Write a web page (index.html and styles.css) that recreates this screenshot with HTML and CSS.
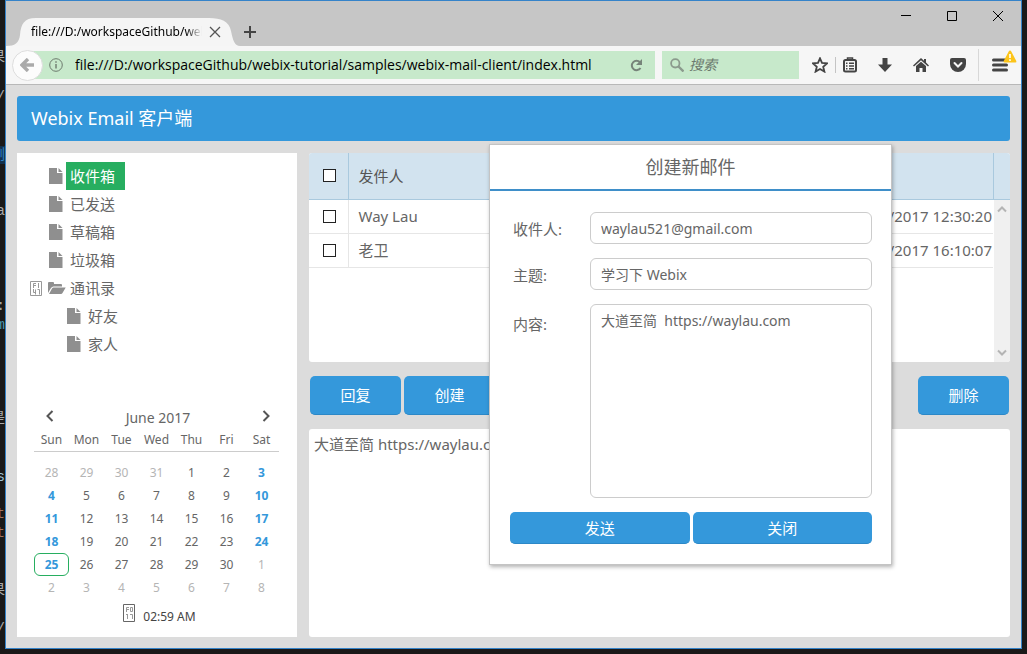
FILE: index.html
```html
<!DOCTYPE html>
<html lang="zh-CN">
<head>
<meta charset="utf-8">
<title>Webix Email 客户端</title>
<link rel="stylesheet" href="styles.css">
</head>
<body>
<svg class="defs" aria-hidden="true">
  <symbol id="file" viewBox="0 0 14 16"><path fill="currentColor" d="M0 0h8v5h5.500v11H0z"/><path fill="currentColor" d="M9.500 0v4h4z"/></symbol>
</svg>
<div class="desktop">
  <div class="code" aria-hidden="true">
    <span class="code-line light" style="top:48px">果</span>
    <span class="code-line light" style="top:88px">/</span>
    <span class="code-line blue boxed" style="top:146px">例</span>
    <span class="code-line light" style="top:202px">na</span>
    <span class="code-line light" style="top:297px">:</span>
    <span class="code-line teal" style="top:316px">m</span>
    <span class="code-line light" style="top:409px">是</span>
    <span class="code-line pale" style="top:468px">s</span>
    <span class="code-line brown" style="top:505px">t</span>
    <span class="code-line brown" style="top:524px">t</span>
    <span class="code-line light" style="top:581px">果</span>
    <span class="code-line light" style="top:620px">/</span>
  </div>
  <div class="window">
    <div class="titlebar">
      <div class="tab">
        <svg class="tab-shape" viewBox="0 0 234 28" preserveAspectRatio="none"><path fill="#f5f5f5" d="M0 28C9 28 13 25 14 17C15 6 18 0 30 0H203C215 0 223 3 225 13C227 23 229 28 234 28z"/></svg>
        <span class="tab-title">file:///D:/workspaceGithub/webix</span>
        <button class="plain" aria-label="Close tab"><svg width="12" height="12" viewBox="0 0 12 12"><path d="M1 1l10 10M11 1L1 11" stroke="#555" stroke-width="1.300"/></svg></button>
      </div>
      <button class="plain new-tab" aria-label="New tab"><svg width="12" height="12" viewBox="0 0 12 12"><path d="M6 0v12M0 6h12" stroke="#444" stroke-width="2"/></svg></button>
      <div class="win-controls">
        <button class="plain" aria-label="Minimize"><svg width="10" height="10" viewBox="0 0 10 10"><path d="M0 4.500h10" stroke="#000"/></svg></button>
        <button class="plain" aria-label="Maximize"><svg width="10" height="10" viewBox="0 0 10 10"><path d="M.5.5h9v9h-9z" fill="none" stroke="#000"/></svg></button>
        <button class="plain" aria-label="Close"><svg width="10" height="10" viewBox="0 0 10 10"><path d="M0 0l10 10M10 0L0 10" stroke="#000"/></svg></button>
      </div>
    </div>
    <div class="toolbar">
      <button class="plain back" aria-label="Back"><svg width="16" height="14" viewBox="0 0 16 14"><path d="M8 1L2 7l6 6M3 7h11" fill="none" stroke="#aaa" stroke-width="3.400"/></svg></button>
      <div class="url">
        <svg width="14" height="14" viewBox="0 0 14 14"><circle cx="7" cy="7" r="6.300" fill="none" stroke="#6d7a6d"/><path d="M7 6v4.500M7 3.200v1.500" stroke="#6d7a6d" stroke-width="1.400"/></svg>
        <input class="url-text" aria-label="Address" value="file:///D:/workspaceGithub/webix-tutorial/samples/webix-mail-client/index.html">
        <button class="plain" aria-label="Reload"><svg width="13" height="13" viewBox="0 0 13 13"><path d="M10 3.300A4.700 4.700 0 1 0 10.500 9" fill="none" stroke="#77847a" stroke-width="2"/><path d="M12 0v6H6z" fill="#77847a"/></svg></button>
      </div>
      <div class="search">
        <svg width="14" height="14" viewBox="0 0 14 14"><circle cx="5.300" cy="5.300" r="4.200" fill="none" stroke="#8b9a8d" stroke-width="1.800"/><path d="M8.500 8.500l5 5" stroke="#8b9a8d" stroke-width="2.400"/></svg>
        <input class="search-text" aria-label="搜索" placeholder="搜索">
      </div>
      <div class="tools">
        <button class="plain" aria-label="Bookmark"><svg width="16" height="16" viewBox="0 0 16 16"><path d="M8 1.300l2 4.600 5 .5-3.800 3.300 1.200 4.900L8 12l-4.400 2.600 1.200-4.900L1 6.400l5-.5z" fill="none" stroke="#444" stroke-width="1.800"/></svg></button>
        <i class="rule short"></i>
        <button class="plain" aria-label="Bookmarks list"><svg width="14" height="16" viewBox="0 0 14 16"><path d="M4.500 3V1h5v2" fill="none" stroke="#444" stroke-width="1.500"/><rect x="1" y="3" width="12" height="11.500" rx="1.500" fill="none" stroke="#444" stroke-width="2"/><path d="M3 6.300h1.500M6 6.300h5M3 9h1.500M6 9h5M3 11.700h1.500M6 11.700h5" stroke="#444" stroke-width="1.400"/></svg></button>
        <button class="plain" aria-label="Downloads"><svg width="14" height="14" viewBox="0 0 14 14"><path d="M4.500 0h5v6.500H14L7 14 0 6.500h4.500z" fill="#444"/></svg></button>
        <button class="plain" aria-label="Home"><svg width="16" height="14" viewBox="0 0 16 14"><path d="M0 7.500L8 0l3 2.800V1h2v3.600l3 2.900-1 1L8 2.300 1 8.500z" fill="#444"/><path d="M8 3.700L13 8v6H9.500v-4h-3v4H3V8z" fill="#444"/></svg></button>
        <button class="plain" aria-label="Pocket"><svg width="16" height="14" viewBox="0 0 16 14"><path d="M2 0h12q2 0 2 2v4a8 8 0 0 1-16 0V2q0-2 2-2z" fill="#444"/><path d="M4.500 5L8 8.500 11.500 5" fill="none" stroke="#f5f5f5" stroke-width="2" stroke-linecap="round"/></svg></button>
        <i class="rule"></i>
        <button class="plain menu" aria-label="Menu"><svg width="16" height="14" viewBox="0 0 16 14"><path d="M1.500 2h13M1.500 7h13M1.500 12h13" stroke="#444" stroke-width="3" stroke-linecap="round"/></svg><svg class="warn" width="14" height="13" viewBox="0 0 14 13"><path d="M7 .5q.8 0 1.300 1l5 9.500q.5 1.500-1 1.500H1.700q-1.500 0-1-1.500l5-9.500Q6.200.5 7 .5z" fill="#fcc419"/><path d="M7 4v4M7 9.300v1.600" stroke="#fff" stroke-width="1.600"/></svg></button>
      </div>
    </div>

    <div class="app">
      <h1 class="app-title">Webix Email 客户端</h1>
      <div class="columns">
        <aside class="side">
          <ul class="tree">
            <li class="node selected"><svg class="leaf"><use href="#file"/></svg><a href="#">收件箱</a></li>
            <li class="node"><svg class="leaf"><use href="#file"/></svg><a href="#">已发送</a></li>
            <li class="node"><svg class="leaf"><use href="#file"/></svg><a href="#">草稿箱</a></li>
            <li class="node"><svg class="leaf"><use href="#file"/></svg><a href="#">垃圾箱</a></li>
            <li class="node parent"><svg class="toggle" width="12" height="15" viewBox="0 0 12 15" fill="none" stroke="#999"><path d="M.5.5h11v14H.5z"/><path d="M3.500 7V2.500h2.500M3.500 4.500H6M8.500 2v5M3.500 8v3.500H6M5.500 8.500v5M7.500 8.500h2v5"/></svg><svg class="folder" width="18" height="14" viewBox="0 0 18 14"><path d="M0 12V2q0-1 1-1h4q1 0 1 1v1h7q1 0 1 1v1.500H5.500Q4 5.500 3 7z" fill="#8f8f8f"/><path d="M5.500 6.500h12.200L14.500 12q-.5 1-1.500 1H1l3-5.500q.6-1 1.500-1z" fill="#8f8f8f"/></svg><a href="#">通讯录</a></li>
            <li class="node child"><svg class="leaf"><use href="#file"/></svg><a href="#">好友</a></li>
            <li class="node child"><svg class="leaf"><use href="#file"/></svg><a href="#">家人</a></li>
          </ul>
          <div class="calendar">
            <div class="cal-head">
              <button class="plain" aria-label="Previous month"><svg width="8" height="12" viewBox="0 0 8 12"><path d="M6.500 1L1.500 6l5 5" fill="none" stroke="#555" stroke-width="2"/></svg></button>
              <span class="month">June 2017</span>
              <button class="plain" aria-label="Next month"><svg width="8" height="12" viewBox="0 0 8 12"><path d="M1.500 1l5 5-5 5" fill="none" stroke="#555" stroke-width="2"/></svg></button>
            </div>
            <table class="days">
              <thead><tr><th>Sun</th><th>Mon</th><th>Tue</th><th>Wed</th><th>Thu</th><th>Fri</th><th>Sat</th></tr></thead>
              <tbody>
                <tr class="spacer"><td colspan="7"></td></tr>
                <tr><td class="out">28</td><td class="out">29</td><td class="out">30</td><td class="out">31</td><td>1</td><td>2</td><td class="we">3</td></tr>
                <tr><td class="we">4</td><td>5</td><td>6</td><td>7</td><td>8</td><td>9</td><td class="we">10</td></tr>
                <tr><td class="we">11</td><td>12</td><td>13</td><td>14</td><td>15</td><td>16</td><td class="we">17</td></tr>
                <tr><td class="we">18</td><td>19</td><td>20</td><td>21</td><td>22</td><td>23</td><td class="we">24</td></tr>
                <tr><td class="we"><span class="today">25</span></td><td>26</td><td>27</td><td>28</td><td>29</td><td>30</td><td class="out">1</td></tr>
                <tr><td class="out">2</td><td class="out">3</td><td class="out">4</td><td class="out">5</td><td class="out">6</td><td class="out">7</td><td class="out">8</td></tr>
              </tbody>
            </table>
            <div class="time"><svg width="12" height="18" viewBox="0 0 12 18" fill="none" stroke="#666"><path d="M.5.500h11v17H.5z"/><path stroke="#999" d="M3.500 8V3.500H6M3.500 5.500H6M7.500 3.500h2v4h-2zM4.500 10v5M3 10.500h1.500M7 10.500h2.500v4.500"/></svg><span>02:59 AM</span></div>
          </div>
        </aside>

        <main class="main">
          <div class="grid">
            <table class="mails">
              <thead><tr><th class="tick"><input type="checkbox" aria-label="全选"></th><th>发件人</th><th class="date"></th><th class="bar"></th></tr></thead>
              <tbody>
                <tr><td class="tick"><input type="checkbox" aria-label="Way Lau"></td><td>Way Lau</td><td class="date">/2017 12:30:20</td></tr>
                <tr><td class="tick"><input type="checkbox" aria-label="老卫"></td><td>老卫</td><td class="date">/2017 16:10:07</td></tr>
              </tbody>
            </table>
            <div class="scroll">
              <svg width="10" height="8" viewBox="0 0 10 8"><path d="M1 6.500l4-4 4 4" fill="none" stroke="#b4b4b4" stroke-width="2"/></svg>
              <svg width="10" height="8" viewBox="0 0 10 8"><path d="M1 1.500l4 4 4-4" fill="none" stroke="#b4b4b4" stroke-width="2"/></svg>
            </div>
          </div>
          <div class="actions">
            <button class="btn">回复</button>
            <button class="btn">创建</button>
            <button class="btn last">删除</button>
          </div>
          <article class="detail">大道至简 https://waylau.com</article>
        </main>
      </div>

      <form class="dialog" role="dialog" aria-labelledby="dialog-title">
        <h2 class="dialog-title" id="dialog-title">创建新邮件</h2>
        <div class="fields">
          <label for="to">收件人:</label><input class="field" id="to" value="waylau521@gmail.com">
          <label for="subject">主题:</label><input class="field" id="subject" value="学习下 Webix">
          <label class="top" for="body">内容:</label><textarea class="field body" id="body">大道至简  https://waylau.com</textarea>
        </div>
        <div class="dialog-actions">
          <button class="btn" type="button">发送</button>
          <button class="btn" type="button">关闭</button>
        </div>
      </form>
    </div>
  </div>
</div>
</body>
</html>
```

FILE: styles.css
```css
* { box-sizing: border-box; }
body {
  margin: 0;
  background: #1a1919;
  color: #666;
  font: 15px/20px "Noto Sans", "Noto Sans CJK SC", sans-serif;
}
button, input, textarea { font: inherit; color: inherit; margin: 0; }
a { color: inherit; text-decoration: none; }
svg { flex: none; display: block; }
.defs { position: absolute; width: 0; height: 0; }
.plain { display: flex; align-items: center; justify-content: center; padding: 0; border: 0; background: none; }

.desktop { position: relative; display: flex; min-height: 100vh; padding: 0 5px 5px; }
.code { position: absolute; left: 0; top: 0; bottom: 0; width: 5px; overflow: hidden; font: 14px/18px "Liberation Mono", "Noto Sans CJK SC", monospace; }
.code-line { position: absolute; right: 0; }
.light { color: #aaa; }
.pale { color: #9ec3d8; }
.blue { color: #2f83c8; }
.boxed { background: #12314d; }
.teal { color: #4a9ab5; }
.brown { color: #a5745c; }

.window { flex: 1; min-width: 0; display: flex; flex-direction: column; border: 1px solid #3583c9; background: #dcdcdc; }

.titlebar { display: flex; align-items: flex-end; height: 45px; background: #c6c6c6; }
.tab { position: relative; display: flex; align-items: center; width: 234px; height: 28px; padding: 0 12px 0 25px; gap: 7px; }
.tab-shape { position: absolute; left: 0; top: 0; width: 100%; height: 100%; }
.tab-title {
  position: relative; width: 171px; overflow: hidden; white-space: nowrap;
  color: #000; font: 12px/18px "Noto Sans", sans-serif;
  mask-image: linear-gradient(to right, #000 155px, transparent);
}
.tab .plain { position: relative; }
.new-tab { width: 20px; height: 28px; }
.win-controls { display: flex; align-self: flex-start; gap: 36px; margin-left: auto; padding: 10px 18px 0 0; }

.toolbar { display: flex; align-items: center; height: 39px; padding: 0 13px 0 6px; border-bottom: 1px solid #b8b8b8; background: #f6f6f6; }
.back { z-index: 1; flex: none; width: 31px; height: 31px; border: 1px solid #ddd; border-radius: 50%; background: #fcfcfc; }
.url { display: flex; align-items: center; flex: 1; min-width: 0; height: 28px; margin-left: -12px; padding: 0 12px 0 18px; background: #c7e9cb; }
.url-text { flex: 1; min-width: 0; margin: 0 36px 0 12px; padding: 0; border: 0; background: none; color: #000; font: 14px/20px "Open Sans", sans-serif; }
.search { display: flex; align-items: center; width: 137px; height: 28px; margin-left: 7px; padding: 0 8px; gap: 5px; background: #c7e9cb; }
.search-text { flex: 1; min-width: 0; padding: 0; border: 0; background: none; font-size: 14px; font-style: italic; }
.search-text::placeholder { color: #6c7a6e; opacity: 1; }
.tools { display: flex; align-items: center; gap: 21px; margin-left: 13px; }
.rule { width: 1px; height: 32px; margin: 0 -8px 0 -9px; background: #d8d8d8; }
.rule.short { height: 16px; margin: 0 -14px; background: #c4c4c4; }
.menu { position: relative; }
.warn { position: absolute; left: 11px; top: -8px; }

.app { position: relative; flex: 1; display: flex; flex-direction: column; gap: 12px; padding: 11px; }
.app-title { margin: 0; padding: 0 14px; border-radius: 3px; background: #3498db; color: #fff; font-size: 18px; font-weight: 400; line-height: 45px; }
.columns { flex: 1; display: flex; gap: 12px; }

.side { flex: none; display: flex; flex-direction: column; justify-content: space-between; width: 280px; padding: 9px 0 8px; background: #fff; }
.tree { margin: 0; padding: 0 0 0 32px; list-style: none; }
.node { display: flex; align-items: center; gap: 3px; height: 28px; line-height: 28px; }
.node a { padding: 0 10px 0 4px; }
.node.child { padding-left: 18px; }
.node.parent { margin-left: -19px; }
.node.parent a { margin-left: -3px; }
.toggle { margin-right: 3px; }
.leaf { width: 14px; height: 16px; color: #8f8f8f; }
.selected a { background: #27ae60; color: #fff; }

.calendar { padding: 0 18px 0 17px; font-size: 12px; }
.cal-head { display: flex; align-items: center; justify-content: space-between; height: 26px; padding: 0 9px 0 12px; }
.month { font-size: 14px; padding-top: 3px; }
.days { width: 100%; border-collapse: collapse; table-layout: fixed; text-align: center; }
.days th { height: 22px; padding: 0; border-bottom: 1px solid #ccc; font-weight: 400; line-height: 20px; }
.days td { height: 23px; padding: 0; line-height: 23px; }
.days .spacer td { height: 10px; }
.days .out { color: #b5b5b5; }
.days .we { color: #3498db; font-weight: 700; }
.today { display: block; border: 1px solid #27ae60; border-radius: 6px; line-height: 21px; }
.time { display: flex; align-items: center; justify-content: center; gap: 8px; padding: 5px 0 0 6px; color: #444; }
.time svg { margin-bottom: 7px; }

.main { flex: 1; min-width: 0; display: grid; grid-template-rows: 1fr auto 1fr; gap: 14px; }
.grid { position: relative; border-radius: 3px; background: #fff; overflow: hidden; }
.mails { width: 100%; border-collapse: collapse; table-layout: fixed; }
.mails th, .mails td { padding: 0 10px; text-align: left; font-weight: 400; white-space: nowrap; }
.mails th { height: 46px; border-bottom: 1px solid #a9c9de; background: #d2e3ef; color: #555; }
.mails td { height: 34px; border-bottom: 1px solid #e6e6e6; }
.mails .tick { width: 39px; border-right: 1px solid #e6e6e6; padding: 0 0 0 14px; }
.mails th.tick, .mails th.date { border-right: 1px solid #a9c9de; }
.mails .date { padding: 0 1px; text-align: right; }
.mails .bar { width: 17px; padding: 0; }
.tick input { display: block; appearance: none; width: 13px; height: 13px; border: 1px solid #222; background: #fff; }
.scroll { position: absolute; right: 0; top: 47px; bottom: 0; width: 16px; display: flex; flex-direction: column; align-items: center; justify-content: space-between; padding: 5px 0; background: #f0f0f0; }
.actions { display: flex; gap: 3px; padding: 0 1px; }
.btn { height: 39px; padding: 0; border: 0; border-bottom: 1px solid #2c88c7; border-radius: 5px; background: #3498db; color: #fff; }
.actions .btn { width: 91px; }
.actions .last { margin-left: auto; }
.detail { padding: 5px; border-radius: 3px; background: #fff; }

.dialog { position: absolute; right: 129px; top: 59px; width: 403px; border: 1px solid #c4c4c4; background: #fff; box-shadow: 1px 2px 4px rgba(0, 0, 0, .3); }
.dialog-title { margin: 0; border-bottom: 2px solid #3f8fc9; font-size: 18px; font-weight: 400; line-height: 44px; text-align: center; }
.fields { display: grid; grid-template-columns: 77px 1fr; gap: 14px 0; padding: 21px 19px 14px 23px; }
.fields label { padding-top: 7px; }
.field { width: 100%; height: 32px; padding: 0 10px; border: 1px solid #ccc; border-radius: 6px; background: #fff; font-size: 14px; }
.field.body { display: block; height: 194px; padding: 6px 10px; resize: none; }
.fields label.top { padding-top: 10px; }
.dialog-actions { display: flex; gap: 3px; padding: 0 19px 20px 20px; }
.dialog-actions .btn { flex: 1; height: 32px; }
```
